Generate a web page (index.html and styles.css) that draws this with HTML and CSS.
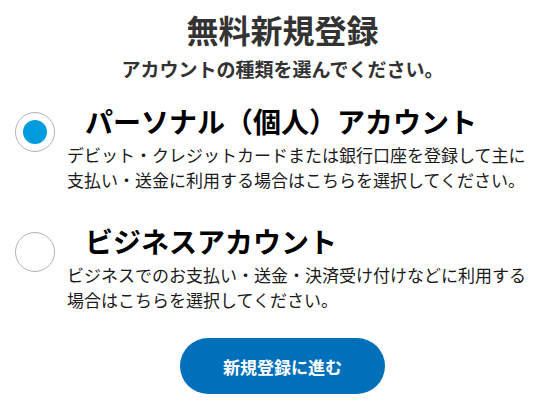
FILE: index.html
```html
<!DOCTYPE html>
<html lang="ja">
<head>
<meta charset="utf-8">
<title>無料新規登録</title>
<link rel="stylesheet" href="styles.css">
</head>
<body>
<main class="page">
  <h1 class="title">無料新規登録</h1>
  <p class="subtitle">アカウントの種類を選んでください。</p>

  <label class="option">
    <span class="radio radio-checked"><span class="radio-dot"></span></span>
    <span class="option-text">
      <span class="option-title">パーソナル（個人）アカウント</span>
      <span class="option-desc">デビット・クレジットカードまたは銀行口座を登録して主に支払い・送金に利用する場合はこちらを選択してください。</span>
    </span>
  </label>

  <label class="option option-second">
    <span class="radio"></span>
    <span class="option-text">
      <span class="option-title">ビジネスアカウント</span>
      <span class="option-desc">ビジネスでのお支払い・送金・決済受け付けなどに利用する場合はこちらを選択してください。</span>
    </span>
  </label>

  <button class="next-btn" type="button">新規登録に進む</button>
</main>
</body>
</html>
```

FILE: styles.css
```css
* {
  box-sizing: border-box;
}

html, body {
  margin: 0;
  padding: 0;
  background: #ffffff;
}

body {
  font-family: "Noto Sans CJK JP", "Noto Sans", sans-serif;
  color: #1a1a1a;
}

.page {
  width: 550px;
  padding: 9px 0 0 15px;
  display: flex;
  flex-direction: column;
}

.title {
  margin: 0;
  font-size: 32px;
  line-height: 40px;
  font-weight: 700;
  color: #333333;
  text-align: center;
}

.subtitle {
  margin: 6px 0 0;
  font-size: 19px;
  line-height: 28px;
  font-weight: 700;
  color: #333333;
  text-align: center;
}

.option {
  display: flex;
  align-items: flex-start;
  margin-top: 23px;
  cursor: pointer;
}

.option-second {
  margin-top: 34px;
}

.radio {
  flex: 0 0 40px;
  width: 40px;
  height: 40px;
  margin-top: 6px;
  border: 1px solid #b3b3b3;
  border-radius: 50%;
  display: flex;
  align-items: center;
  justify-content: center;
  background: #ffffff;
}

.radio-dot {
  width: 24px;
  height: 24px;
  border-radius: 50%;
  background: #009cde;
}

.option-text {
  display: flex;
  flex-direction: column;
  margin-left: 12px;
  width: 464px;
}

.option-title {
  padding-left: 18px;
  font-size: 28px;
  line-height: 30px;
  font-weight: 700;
  color: #000000;
  white-space: nowrap;
}

.option-desc {
  margin-top: 6px;
  font-size: 17px;
  line-height: 25px;
  color: #1a1a1a;
}

.next-btn {
  align-self: center;
  margin-top: 26px;
  width: 205px;
  height: 56px;
  border: none;
  border-radius: 28px;
  background: #0070ba;
  color: #ffffff;
  font-family: "Noto Sans CJK JP", "Noto Sans", sans-serif;
  font-size: 17px;
  font-weight: 700;
  cursor: pointer;
}
```
